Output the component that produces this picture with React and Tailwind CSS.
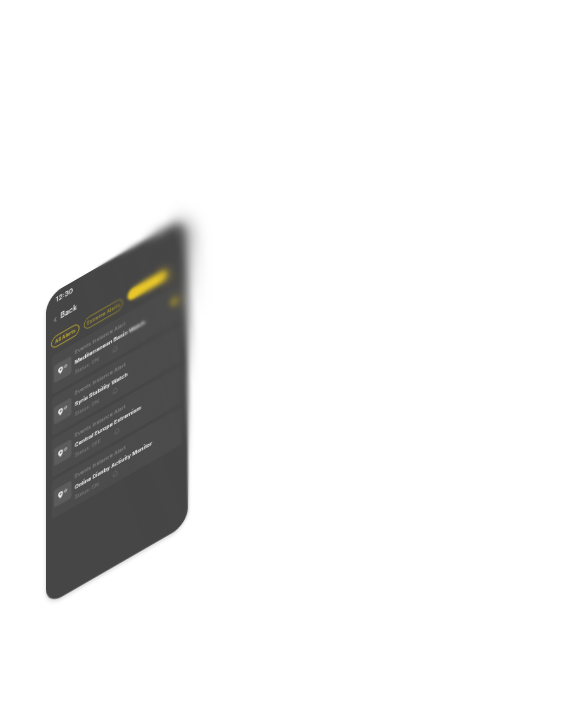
import React from 'react';
import { Bell, ChevronLeft } from 'lucide-react';

const alerts = [
  { title: 'Mediterranean Basin Watch', status: 'Status: ON', dot: true },
  { title: 'Syria Stability Watch', status: 'Status: ON' },
  { title: 'Central Europe Extremism', status: 'Status: OFF' },
  { title: 'Online Diasby Activity Monitor', status: 'Status: ON' },
];

function PinIcon() {
  return (
    <svg width="28" height="24" viewBox="0 0 28 24" fill="none">
      <path d="M8 2a6.5 6.5 0 0 0-6.5 6.5C1.500 13 8 20 8 20s6.500-7 6.500-11.500A6.500 6.500 0 0 0 8 2z" fill="#eee" />
      <circle cx="8" cy="8.500" r="2.500" fill="#5c5c5c" />
      <circle cx="22" cy="7" r="3" stroke="#ddd" strokeWidth="2" />
    </svg>
  );
}

function AlertCard({ alert }) {
  return (
    <div className="relative flex h-[105px] items-center gap-[9px] rounded-lg bg-[#4c4c4c] pl-[6px]">
      <div className="flex h-[48px] w-[48px] items-center justify-center rounded-md bg-[#5c5c5c]">
        <PinIcon />
      </div>
      <div className="flex flex-col gap-[9px]">
        <span className="text-[14px] leading-[18px] text-[#8d8d8d]">Events Instance Alert</span>
        <span className="whitespace-nowrap text-[14.5px] font-semibold leading-[20px] text-white">{alert.title}</span>
        <div className="flex items-center gap-[36px]">
          <span className="text-[13px] leading-[18px] text-[#808080]">{alert.status}</span>
          <Bell size={18} strokeWidth={1.5} className="text-[#808080]" />
        </div>
      </div>
      {alert.dot && <div className="absolute right-[8px] top-[31px] h-[24px] w-[24px] rounded-full bg-[#a8962f]" />}
    </div>
  );
}

export default function App() {
  return (
    <div className="relative h-[715px] w-[588px] overflow-hidden bg-white pl-[46px] pt-[297px] font-['Inter',sans-serif]">
      <div className="h-[848px] w-[390px] origin-top-left rounded-[44px] bg-[#464646] blur-[0.6px] shadow-[0_5px_12px_rgba(0,0,0,0.18)] [transform:matrix(0.364,-0.21,0,0.364,0,0)]">
        <div className="px-[27px] pt-[12px] text-[18px] font-medium leading-[24px] text-white">12:30</div>
        <div className="mt-[29px] flex items-center gap-[6px] pl-[16px] text-[19px] font-medium leading-[24px] text-white">
          <ChevronLeft size={18} />
          Back
        </div>
        <div className="mt-[33px] flex items-start gap-[12px] pl-[14px]">
          <div className="flex h-[32px] w-[78px] items-center justify-center rounded-full border-2 border-[#d9bb2b] text-[13px] font-medium text-[#d9bb2b]">All Alerts</div>
          <div className="flex h-[32px] w-[108px] items-center justify-center rounded-full border-2 border-[#a8962f] text-[13px] font-medium text-[#a8962f]">Extreme Alerts</div>
          <div className="-mt-[10px] flex h-[32px] w-[112px] items-center justify-center rounded-full bg-[#ecc92a] text-[13px] font-medium text-[#ecc92a]">Saved</div>
        </div>
        <div className="mx-[16px] mt-[19px] flex flex-col gap-[9px]">
          {alerts.map((alert) => (
            <AlertCard key={alert.title} alert={alert} />
          ))}
        </div>
      </div>

      {/* progressive blur, stronger toward the top right */}
      <div className="pointer-events-none absolute inset-0 backdrop-blur-[0.7px] [mask-image:linear-gradient(70deg,transparent_195px,black_225px)]" />
      <div className="pointer-events-none absolute inset-0 backdrop-blur-[1.2px] [mask-image:linear-gradient(70deg,transparent_240px,black_260px)]" />
      <div className="pointer-events-none absolute inset-0 backdrop-blur-[2px] [mask-image:linear-gradient(70deg,transparent_265px,black_285px)]" />
      <div className="pointer-events-none absolute inset-0 backdrop-blur-[4px] [mask-image:linear-gradient(70deg,transparent_295px,black_315px)]" />
      <div className="pointer-events-none absolute inset-0 backdrop-blur-[8px] [mask-image:linear-gradient(70deg,transparent_325px,black_350px)]" />
    </div>
  );
}
